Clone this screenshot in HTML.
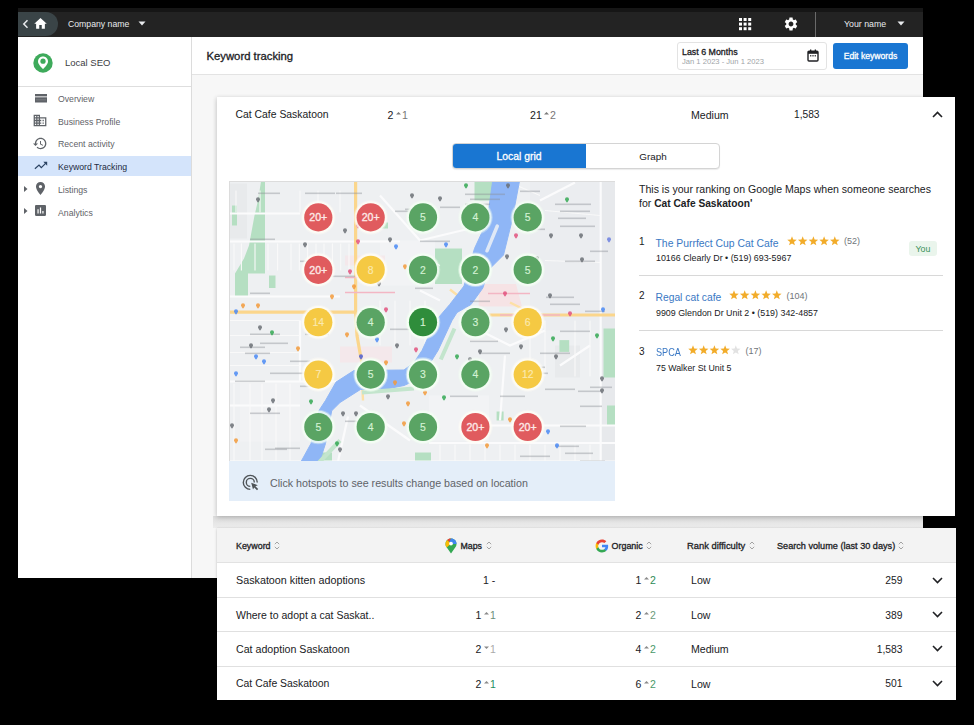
<!DOCTYPE html>
<html><head><meta charset="utf-8">
<style>
*{margin:0;padding:0;box-sizing:border-box}
html,body{width:974px;height:725px;overflow:hidden;background:#000}
body{position:relative;font-family:"Liberation Sans",sans-serif;color:#202124}
.a{position:absolute;white-space:nowrap}
#topbar{left:18px;top:8px;width:905px;height:29px;background:#232323;border-top:4px solid #161616}
#pill{left:18px;top:12px;width:40px;height:24px;background:#3a4447;border-radius:0 12px 12px 0}
#side{left:18px;top:37px;width:174px;height:541px;background:#fff;border-right:1px solid #dcdcdc}
#hdr{left:192px;top:37px;width:731px;height:38px;background:#fff;border-bottom:1px solid #e3e3e3}
#main{left:192px;top:75px;width:731px;height:503px;background:#f7f7f7}
.card{background:#fff;box-shadow:0 1px 3px rgba(0,0,0,.18),0 0 1px rgba(0,0,0,.1)}
#card1{left:217px;top:97px;width:738px;height:419px;box-shadow:0 2px 5px rgba(0,0,0,.16),-1px 0 4px rgba(0,0,0,.08)}
#card2{left:217px;top:528px;width:739px;height:172px}
.m{-webkit-text-stroke:0.3px currentColor}
.nav{left:18px;width:173px;height:21px}
.nav span{position:absolute;left:40px;top:5px;font-size:8.7px;color:#5f6368}
.nav svg{position:absolute;left:16px;top:3px}
</style></head><body>
<div id="topbar" class="a"></div>
<div id="pill" class="a"></div>
<div id="side" class="a"></div>
<div id="hdr" class="a"></div>
<div id="main" class="a"></div>
<div class="a" style="left:213px;top:516px;width:710px;height:12px;background:linear-gradient(#dedede,#ececec)"></div>
<div id="card1" class="a card"></div>
<div id="card2" class="a card"></div>
<!-- TOP BAR -->
<svg class="a" style="left:21px;top:19px" width="9" height="10" viewBox="0 0 9 10"><path d="M6.5 1.2 L2.8 5 L6.5 8.8" fill="none" stroke="#e8eaed" stroke-width="1.5"/></svg>
<svg class="a" style="left:33px;top:16px" width="15" height="14" viewBox="0 0 24 22"><path d="M10 20v-6h4v6h5v-8h3L12 3 2 12h3v8z" fill="#fff"/></svg>
<div class="a t" style="left:68px;top:18px;font-size:8.7px;line-height:12px;color:#e8eaed">Company name</div>
<svg class="a" style="left:138px;top:21px" width="8" height="5" viewBox="0 0 8 5"><path d="M0.5 0.5h7L4 4.5z" fill="#e8eaed"/></svg>
<svg class="a" style="left:738.7px;top:18.2px" width="13" height="13" viewBox="0 0 13 13" fill="#fff"><rect x="0.0" y="0.0" width="3" height="3"/><rect x="4.6" y="0.0" width="3" height="3"/><rect x="9.2" y="0.0" width="3" height="3"/><rect x="0.0" y="4.6" width="3" height="3"/><rect x="4.6" y="4.6" width="3" height="3"/><rect x="9.2" y="4.6" width="3" height="3"/><rect x="0.0" y="9.2" width="3" height="3"/><rect x="4.6" y="9.2" width="3" height="3"/><rect x="9.2" y="9.2" width="3" height="3"/></svg>
<svg class="a" style="left:782.6px;top:16.2px" width="16" height="16" viewBox="0 0 24 24"><path fill="#fff" d="M19.14 12.94c.04-.3.06-.61.06-.94 0-.32-.02-.64-.07-.94l2.03-1.58c.18-.14.23-.41.12-.61l-1.92-3.32c-.12-.22-.37-.29-.59-.22l-2.39.96c-.5-.38-1.03-.7-1.62-.94l-.36-2.54c-.04-.24-.24-.41-.48-.41h-3.84c-.24 0-.43.17-.47.41l-.36 2.54c-.59.24-1.13.57-1.62.94l-2.39-.96c-.22-.08-.47 0-.59.22L2.74 8.87c-.12.21-.08.47.12.61l2.03 1.58c-.05.3-.09.63-.09.94s.02.64.07.94l-2.03 1.58c-.18.14-.23.41-.12.61l1.92 3.32c.12.22.37.29.59.22l2.39-.96c.5.38 1.03.7 1.62.94l.36 2.54c.05.24.24.41.48.41h3.84c.24 0 .44-.17.47-.41l.36-2.54c.59-.24 1.13-.56 1.62-.94l2.39.96c.22.08.47 0 .59-.22l1.92-3.32c.12-.22.07-.47-.12-.61l-2.01-1.58zM12 15.6c-1.98 0-3.6-1.62-3.6-3.6s1.62-3.6 3.6-3.6 3.6 1.62 3.6 3.6-1.62 3.6-3.6 3.6z"/></svg>
<div class="a" style="left:815px;top:12px;width:1px;height:25px;background:#6a6a6a"></div>
<div class="a t" style="left:844px;top:18px;font-size:8.8px;line-height:12px;color:#e8eaed">Your name</div>
<svg class="a" style="left:897px;top:21px" width="8" height="5" viewBox="0 0 8 5"><path d="M0.5 0.5h7L4 4.5z" fill="#e8eaed"/></svg>

<!-- SIDEBAR -->
<svg class="a" style="left:32.5px;top:52.5px" width="20" height="20" viewBox="0 0 20 20"><circle cx="10" cy="10" r="9.7" fill="#3eaa5b"/><path d="M10 3.6c-2.9 0-5 2.2-5 4.9 0 3.2 5 7.6 5 7.6s5-4.4 5-7.6c0-2.7-2.1-4.9-5-4.9z" fill="#fff"/><circle cx="10" cy="8.2" r="2.6" fill="#3eaa5b"/></svg>
<div class="a t" style="left:65px;top:57px;font-size:9.5px;line-height:12px;color:#3c4043">Local SEO</div>
<div class="a" style="left:18px;top:86px;width:173px;height:1px;background:#dedede"></div>
<div class="a" style="left:18px;top:155.5px;width:173px;height:20.5px;background:#d4e4fb"></div>
<!-- NAV -->
<svg class="a" style="left:35px;top:94px" width="12" height="9" viewBox="0 0 12 9" fill="#5f6368"><rect x="0" y="0" width="12" height="2.4"/><rect x="0" y="3.3" width="12" height="5.2"/><rect x="1" y="5.6" width="10" height="0.6" fill="#8a8e92"/></svg>
<div class="a t" style="left:58px;top:93px;font-size:8.7px;line-height:12px;color:#5f6368">Overview</div>
<svg class="a" style="left:33px;top:114px" width="14" height="13" viewBox="1 2 22 20"><path fill="#5f6368" d="M12 7V3H2v18h20V7H12zM6 19H4v-2h2v2zm0-4H4v-2h2v2zm0-4H4V9h2v2zm0-4H4V5h2v2zm4 12H8v-2h2v2zm0-4H8v-2h2v2zm0-4H8V9h2v2zm0-4H8V5h2v2zm10 12h-8v-2h2v-2h-2v-2h2v-2h-2V9h8v10zm-2-8h-2v2h2v-2zm0 4h-2v2h2v-2z"/></svg>
<div class="a t" style="left:58px;top:115.5px;font-size:8.7px;line-height:12px;color:#5f6368">Business Profile</div>
<svg class="a" style="left:33px;top:137px" width="14" height="13" viewBox="1 2.5 22 19"><path fill="#5f6368" d="M13 3c-4.970 0-9 4.03-9 9H1l3.89 3.89.07.14L9 12H6c0-3.87 3.13-7 7-7s7 3.130 7 7-3.13 7-7 7c-1.93 0-3.68-.79-4.94-2.06l-1.42 1.42C8.27 19.99 10.51 21 13 21c4.97 0 9-4.03 9-9s-4.03-9-9-9zm-1 5v5l4.28 2.54.72-1.21-3.5-2.08V8H12z"/></svg>
<div class="a t" style="left:58px;top:138px;font-size:8.7px;line-height:12px;color:#5f6368">Recent activity</div>
<svg class="a" style="left:34px;top:160px" width="14" height="10" viewBox="0 0 14 10"><path d="M0.9 8.7L5 5 7.3 7.6 11.6 3.3" fill="none" stroke="#2a4262" stroke-width="1.2"/><path d="M9.3 1.8H13.2V5.7z" fill="#2a4262"/></svg>
<div class="a t" style="left:58px;top:161px;font-size:8.7px;line-height:12px;color:#1d2b3f">Keyword Tracking</div>
<svg class="a" style="left:24px;top:186px" width="4" height="6" viewBox="0 0 4 6"><path d="M0 0l3.5 3L0 6z" fill="#5f6368"/></svg>
<svg class="a" style="left:35px;top:182px" width="11" height="13" viewBox="5 2 14 20"><path fill="#5f6368" d="M12 2C8.130 2 5 5.130 5 9c0 5.250 7 13 7 13s7-7.750 7-13c0-3.870-3.130-7-7-7zm0 9.5c-1.380 0-2.500-1.120-2.500-2.500s1.120-2.500 2.500-2.500 2.500 1.120 2.500 2.500-1.120 2.500-2.500 2.500z"/></svg>
<div class="a t" style="left:58px;top:183.5px;font-size:8.7px;line-height:12px;color:#5f6368">Listings</div>
<svg class="a" style="left:24px;top:208px" width="4" height="6" viewBox="0 0 4 6"><path d="M0 0l3.5 3L0 6z" fill="#5f6368"/></svg>
<svg class="a" style="left:35px;top:205px" width="11" height="11" viewBox="3 3 18 18"><path fill="#5f6368" d="M19 3H5c-1.100 0-2 .9-2 2v14c0 1.100.9 2 2 2h14c1.100 0 2-.9 2-2V5c0-1.100-.9-2-2-2zM9 17H7v-7h2v7zm4 0h-2V7h2v10zm4 0h-2v-4h2v4z"/></svg>
<div class="a t" style="left:58px;top:206.5px;font-size:8.7px;line-height:12px;color:#5f6368">Analytics</div>

<!-- HEADER -->
<div class="a t m" style="left:206.5px;top:49.5px;font-size:11.3px;line-height:13px;color:#202124">Keyword tracking</div>
<div class="a" style="left:677px;top:42px;width:150px;height:28px;border:1px solid #e3e3e3;border-radius:3px;background:#fff"></div>
<div class="a t m" style="left:682px;top:45.5px;font-size:8.85px;line-height:12px;color:#202124">Last 6 Months</div>
<div class="a t" style="left:682px;top:56px;font-size:7.6px;line-height:12px;color:#a0a4a8">Jan 1 2023 - Jun 1 2023</div>
<svg class="a" style="left:807px;top:49px" width="12" height="13" viewBox="0 0 12 13"><rect x="1" y="2.2" width="10" height="9.8" rx="1" fill="none" stroke="#202124" stroke-width="1.4"/><rect x="1" y="2.2" width="10" height="2.6" fill="#202124"/><rect x="3" y="0.5" width="1.3" height="2.5" fill="#202124"/><rect x="7.7" y="0.5" width="1.3" height="2.5" fill="#202124"/><rect x="3" y="6.2" width="1.4" height="1.2" fill="#202124"/><rect x="5.3" y="6.2" width="1.4" height="1.2" fill="#202124"/><rect x="7.6" y="6.2" width="1.4" height="1.2" fill="#202124"/></svg>
<div class="a" style="left:833px;top:43px;width:75px;height:26px;border-radius:3px;background:#1976d2"></div>
<div class="a t m" style="left:833px;top:50px;width:75px;text-align:center;font-size:8.65px;line-height:12px;color:#fff">Edit keywords</div>
<!-- CARD1 TOP ROW -->
<div class="a t" style="left:235.5px;top:108.8px;font-size:10.4px;line-height:12px;color:#202124">Cat Cafe Saskatoon</div>
<div class="a t" style="left:387.5px;top:108.8px;font-size:10.6px;line-height:12px;color:#202124">2</div>
<svg class="a" style="left:395.5px;top:111.8px" width="5" height="3" viewBox="0 0 5 3"><path d="M0 2.5L2.5 0 5 2.5z" fill="#7a7a7a"/></svg>
<div class="a t" style="left:402px;top:108.8px;font-size:10.6px;line-height:12px;color:#777">1</div>
<div class="a t" style="left:530px;top:108.8px;font-size:10.6px;line-height:12px;color:#202124">21</div>
<svg class="a" style="left:543.5px;top:111.8px" width="5" height="3" viewBox="0 0 5 3"><path d="M0 2.5L2.5 0 5 2.5z" fill="#7a7a7a"/></svg>
<div class="a t" style="left:550px;top:108.8px;font-size:10.6px;line-height:12px;color:#777">2</div>
<div class="a t" style="left:691px;top:108.8px;font-size:10.6px;line-height:12px;color:#202124">Medium</div>
<div class="a t" style="left:794px;top:108.8px;font-size:10.2px;line-height:12px;color:#202124">1,583</div>
<svg class="a" style="left:932px;top:110.5px" width="11" height="7" viewBox="0 0 11 7"><path d="M1 6L5.5 1.5 10 6" fill="none" stroke="#202124" stroke-width="1.6"/></svg>

<!-- TOGGLE -->
<div class="a" style="left:452px;top:143px;width:268px;height:26px;border:1px solid #d4d4d4;border-radius:4px;background:#fff;overflow:hidden;box-shadow:0 1px 1px rgba(0,0,0,.08)"><div style="position:absolute;left:0;top:0;width:133px;height:100%;background:#1976d2"></div></div>
<div class="a t m" style="left:452px;top:150.8px;width:134px;text-align:center;font-size:10.4px;line-height:12px;color:#fff">Local grid</div>
<div class="a t" style="left:586px;top:150.5px;width:134px;text-align:center;font-size:9.9px;line-height:12px;color:#202124">Graph</div>

<!-- RIGHT LIST -->
<div class="a t" style="left:639px;top:183px;font-size:10.55px;line-height:12px;color:#202124">This is your ranking on Google Maps when someone searches</div>
<div class="a t" style="left:639px;top:197px;font-size:10.55px;line-height:12px;color:#202124">for <b style="font-size:10.2px">Cat Cafe Saskatoon'</b></div>

<div class="a t" style="left:639px;top:236.3px;font-size:10px;line-height:12px;color:#202124">1</div>
<div class="a t" style="left:655.5px;top:237.5px;font-size:10.4px;line-height:12px;color:#3a78c4">The Purrfect Cup Cat Cafe</div>
<svg class="a" style="left:786.5px;top:235.5px" width="53.5" height="10" viewBox="0 0 53.5 10"><polygon points="5.00,0.30 6.23,3.60 9.76,3.75 7.00,5.95 7.94,9.35 5.00,7.40 2.06,9.35 3.00,5.95 0.24,3.75 3.77,3.60" fill="#f2ac2a"/><polygon points="15.70,0.30 16.93,3.60 20.46,3.75 17.70,5.95 18.64,9.35 15.70,7.40 12.76,9.35 13.70,5.95 10.94,3.75 14.47,3.60" fill="#f2ac2a"/><polygon points="26.40,0.30 27.63,3.60 31.16,3.75 28.40,5.95 29.34,9.35 26.40,7.40 23.46,9.35 24.40,5.95 21.64,3.75 25.17,3.60" fill="#f2ac2a"/><polygon points="37.10,0.30 38.33,3.60 41.86,3.75 39.10,5.95 40.04,9.35 37.10,7.40 34.16,9.35 35.10,5.95 32.34,3.75 35.87,3.60" fill="#f2ac2a"/><polygon points="47.80,0.30 49.03,3.60 52.56,3.75 49.80,5.95 50.74,9.35 47.80,7.40 44.86,9.35 45.80,5.95 43.04,3.75 46.57,3.60" fill="#f2ac2a"/></svg>
<div class="a t" style="left:844px;top:235px;font-size:9px;line-height:12px;color:#70757a">(52)</div>
<div class="a" style="left:909px;top:241px;width:28px;height:15px;border-radius:3px;background:#eaf5ec"></div>
<div class="a t" style="left:909px;top:242.5px;width:28px;text-align:center;font-size:8.8px;line-height:12px;color:#3a9159">You</div>
<div class="a t" style="left:656px;top:252px;font-size:8.9px;line-height:12px;color:#202124">10166 Clearly Dr • (519) 693-5967</div>
<div class="a" style="left:639px;top:275px;width:304px;height:1px;background:#d8d8d8"></div>

<div class="a t" style="left:639px;top:290.3px;font-size:10px;line-height:12px;color:#202124">2</div>
<div class="a t" style="left:655.5px;top:292px;font-size:10.3px;line-height:12px;color:#3a78c4">Regal cat cafe</div>
<svg class="a" style="left:729px;top:290.0px" width="53.5" height="10" viewBox="0 0 53.5 10"><polygon points="5.00,0.30 6.23,3.60 9.76,3.75 7.00,5.95 7.94,9.35 5.00,7.40 2.06,9.35 3.00,5.95 0.24,3.75 3.77,3.60" fill="#f2ac2a"/><polygon points="15.70,0.30 16.93,3.60 20.46,3.75 17.70,5.95 18.64,9.35 15.70,7.40 12.76,9.35 13.70,5.95 10.94,3.75 14.47,3.60" fill="#f2ac2a"/><polygon points="26.40,0.30 27.63,3.60 31.16,3.75 28.40,5.95 29.34,9.35 26.40,7.40 23.46,9.35 24.40,5.95 21.64,3.75 25.17,3.60" fill="#f2ac2a"/><polygon points="37.10,0.30 38.33,3.60 41.86,3.75 39.10,5.95 40.04,9.35 37.10,7.40 34.16,9.35 35.10,5.95 32.34,3.75 35.87,3.60" fill="#f2ac2a"/><polygon points="47.80,0.30 49.03,3.60 52.56,3.75 49.80,5.95 50.74,9.35 47.80,7.40 44.86,9.35 45.80,5.95 43.04,3.75 46.57,3.60" fill="#f2ac2a"/></svg>
<div class="a t" style="left:786.5px;top:290px;font-size:9px;line-height:12px;color:#70757a">(104)</div>
<div class="a t" style="left:656px;top:306.5px;font-size:8.9px;line-height:12px;color:#202124">9909 Glendon Dr Unit 2 • (519) 342-4857</div>
<div class="a" style="left:639px;top:330px;width:304px;height:1px;background:#d8d8d8"></div>

<div class="a t" style="left:639px;top:345.8px;font-size:10px;line-height:12px;color:#202124">3</div>
<div class="a t" style="left:655.5px;top:346.5px;font-size:10.4px;line-height:12px;color:#3a78c4;transform:scaleX(0.88);transform-origin:0 0">SPCA</div>
<svg class="a" style="left:688px;top:345.3px" width="53.5" height="10" viewBox="0 0 53.5 10"><polygon points="5.00,0.30 6.23,3.60 9.76,3.75 7.00,5.95 7.94,9.35 5.00,7.40 2.06,9.35 3.00,5.95 0.24,3.75 3.77,3.60" fill="#f2ac2a"/><polygon points="15.70,0.30 16.93,3.60 20.46,3.75 17.70,5.95 18.64,9.35 15.70,7.40 12.76,9.35 13.70,5.95 10.94,3.75 14.47,3.60" fill="#f2ac2a"/><polygon points="26.40,0.30 27.63,3.60 31.16,3.75 28.40,5.95 29.34,9.35 26.40,7.40 23.46,9.35 24.40,5.95 21.64,3.75 25.17,3.60" fill="#f2ac2a"/><polygon points="37.10,0.30 38.33,3.60 41.86,3.75 39.10,5.95 40.04,9.35 37.10,7.40 34.16,9.35 35.10,5.95 32.34,3.75 35.87,3.60" fill="#f2ac2a"/><polygon points="47.80,0.30 49.03,3.60 52.56,3.75 49.80,5.95 50.74,9.35 47.80,7.40 44.86,9.35 45.80,5.95 43.04,3.75 46.57,3.60" fill="#e2e2e2"/></svg>
<div class="a t" style="left:745.5px;top:345px;font-size:9px;line-height:12px;color:#70757a">(17)</div>
<div class="a t" style="left:656px;top:362px;font-size:8.8px;line-height:12px;color:#202124">75 Walker St Unit 5</div>

<!-- MAP -->
<svg class="a" style="left:229px;top:180.5px" width="386" height="281" viewBox="229 180.5 386 281">
<defs><filter id="bl" x="0" y="0" width="1" height="1"><feGaussianBlur stdDeviation="0.45"/></filter></defs>
<g filter="url(#bl)">
<rect x="229" y="180.5" width="386" height="281" fill="#eef0f2"/>
<rect x="229" y="183" width="18" height="55" fill="#e8eaec"/>
<rect x="530" y="180" width="70" height="150" fill="#ebedf0"/>
<rect x="601" y="180" width="14" height="281" fill="#e7e9ec"/>
<rect x="555" y="345" width="25" height="32" fill="#e8eaec"/>
<rect x="380" y="240" width="55" height="45" fill="#f2f3f5"/>
<rect x="240" y="381" width="60" height="60" fill="#f1f2f4"/>
<rect x="429" y="395" width="60" height="45" fill="#f2f3f5"/>
<polygon points="261,181 265,181 265,273 248,273 248,296 235,296 235,273 244,258 249,245 254.5,215 258,200" fill="#b5dfc2"/>
<path d="M478.7 283.5 L516 283.5 L522 306 L478.7 306z" fill="#f6e3e5"/>
<rect x="340" y="346" width="52" height="16" fill="#f5e6e8" opacity="0.8"/>
<rect x="345" y="255" width="40" height="10" fill="#f5e6e8" opacity="0.8"/>
<rect x="269" y="275" width="6.5" height="12.5" fill="#b5dfc2"/>
<rect x="474.5" y="180" width="18.5" height="20" fill="#b5dfc2"/>
<rect x="435" y="248" width="27" height="35.5" fill="#b5dfc2"/>
<rect x="603.5" y="328" width="11.5" height="49" fill="#b5dfc2"/>
<rect x="559.4" y="339.6" width="9.8" height="11.8" fill="#b5dfc2"/>
<rect x="496.6" y="411" width="7" height="9" fill="#b5dfc2"/>
<rect x="318" y="452" width="14" height="9" fill="#b5dfc2"/>
<rect x="232" y="205" width="5" height="20" fill="#b5dfc2"/>
<rect x="607" y="405" width="8" height="20" fill="#b5dfc2"/>
<rect x="415" y="452" width="16" height="9" fill="#b5dfc2"/>
<rect x="380" y="222" width="8" height="6" fill="#b5dfc2"/>
<path d="M229 241 L400 241 M229 213 L300 213 M229 381 L354 381 M429 442.5 L615 442.5 M488 425 L615 425 M600.7 180 L600.7 461 M300 320 L300 381 M380 195 L420 240 M348 416 L338 461 M420 240 L470 228 M540 200 L575 182 M480 330 L510 345 L545 330 M229 296 L340 296 M420 290 L440 300 M229 405 L300 405 M360 405 L410 440 M505 355 L500 420 M560 365 L590 345 M229 461 L615 461" stroke="#fbfbfc" stroke-width="2.2" fill="none"/>
<path d="M234 243 L234 270 M241.4 243 L241.4 270 M255 243 L255 270 M268 243 L268 270 M277.6 243 L277.6 270 M291 243 L291 270 M299.3 243 L299.3 270 M307.6 243 L307.6 270 M316 243 L316 270 M324 243 L324 270 M332.4 243 L332.4 270 M340.7 243 L340.7 270 M349 243 L349 270 M234 383 L234 461 M250 383 L250 461 M262 383 L262 461 M276 383 L276 461 M290 383 L290 461 M236 190 L236 212 M260 190 L260 212 M300 190 L300 212 M318 190 L318 212 M340 190 L340 212 M440 444 L440 461 M455 444 L455 461 M470 444 L470 461 M485 444 L485 461 M500 444 L500 461 M515 444 L515 461 M530 444 L530 461 M545 444 L545 461 M560 444 L560 461 M575 444 L575 461 M590 444 L590 461 M380 300 L380 345 M395 300 L395 345 M410 300 L410 345 M425 300 L425 345 M229 320 L300 320 M229 335 L300 335 M229 352 L300 352 M229 365 L300 365 M530 320 L530 376 M545 320 L545 376 M575 320 L575 376 M590 320 L590 376 M470 340 L500 340 M505 180 L540 195 M545 210 L600 215 M545 260 L600 262 M420 255 L440 265 M360 330 L380 340" stroke="#fafafa" stroke-width="1.2" fill="none" opacity="0.9"/>
<path d="M229 311.7 L355.6 311.7 M355.6 180 L355.6 311.7 L357 335 L361 358 M489 314.5 L615 314.5" stroke="#fbd68c" stroke-width="3.2" fill="none"/>
<path d="M361 358 L363 400 M450 289 L468 303 M510 302 L530 312" stroke="#fde0a6" stroke-width="2.4" fill="none"/>
<path d="M345 277 L380 277 M345 292 L395 292 M488 293 L530 293 M500 314.5 L560 314.5" stroke="#f3b6c4" stroke-width="1.5" fill="none"/>
<polygon points="493,178 487,221 474.5,248 464,285.5 449.7,304 436,320 422,350 414,362 404,369.5 354,370 336,381.6 325.5,400 319,410 311,443 300,463 319,463 325.5,443 331.7,410.3 340,402 360.4,389 389,388 404,385 415,380 428,366 438,350 452,320 457,312 471,304 482.8,287.6 489,269 503.5,254.5 511.8,221 520,178" fill="#8fb6f6" stroke="#8fb6f6" stroke-width="1" stroke-linejoin="round"/>
<path d="M497.3 225.5 L487 250.3" stroke="#dfe8f6" stroke-width="3.5" stroke-linecap="round"/>
<path d="M440.8 359 L454.5 328 M362 392 L414 388 M319 462 L340 440" stroke="#c3e5cd" stroke-width="4" fill="none"/>
<rect x="258" y="192" width="22" height="1.6" fill="#8a9096" opacity="0.42"/>
<rect x="305" y="192" width="30" height="1.6" fill="#8a9096" opacity="0.42"/>
<rect x="336" y="192" width="26" height="1.6" fill="#8a9096" opacity="0.42"/>
<rect x="465" y="193" width="40" height="1.6" fill="#8a9096" opacity="0.42"/>
<rect x="520" y="190" width="20" height="1.6" fill="#8a9096" opacity="0.42"/>
<rect x="555" y="203" width="36" height="1.6" fill="#8a9096" opacity="0.42"/>
<rect x="560" y="210" width="30" height="1.6" fill="#8a9096" opacity="0.42"/>
<rect x="558" y="217" width="28" height="1.6" fill="#8a9096" opacity="0.42"/>
<rect x="250" y="238" width="25" height="1.6" fill="#8a9096" opacity="0.42"/>
<rect x="300" y="260" width="30" height="1.6" fill="#8a9096" opacity="0.42"/>
<rect x="520" y="228" width="25" height="1.6" fill="#8a9096" opacity="0.42"/>
<rect x="560" y="225" width="35" height="1.6" fill="#8a9096" opacity="0.42"/>
<rect x="565" y="260" width="30" height="1.6" fill="#8a9096" opacity="0.42"/>
<rect x="590" y="250" width="18" height="1.6" fill="#8a9096" opacity="0.42"/>
<rect x="250" y="333" width="30" height="1.6" fill="#8a9096" opacity="0.42"/>
<rect x="305" y="333" width="24" height="1.6" fill="#8a9096" opacity="0.42"/>
<rect x="390" y="328" width="25" height="1.6" fill="#8a9096" opacity="0.42"/>
<rect x="470" y="340" width="28" height="1.6" fill="#8a9096" opacity="0.42"/>
<rect x="560" y="330" width="30" height="1.6" fill="#8a9096" opacity="0.42"/>
<rect x="480" y="352" width="30" height="1.6" fill="#8a9096" opacity="0.42"/>
<rect x="540" y="352" width="30" height="1.6" fill="#8a9096" opacity="0.42"/>
<rect x="245" y="352" width="25" height="1.6" fill="#8a9096" opacity="0.42"/>
<rect x="235" y="380" width="30" height="1.6" fill="#8a9096" opacity="0.42"/>
<rect x="270" y="372" width="35" height="1.6" fill="#8a9096" opacity="0.42"/>
<rect x="450" y="395" width="28" height="1.6" fill="#8a9096" opacity="0.42"/>
<rect x="500" y="395" width="25" height="1.6" fill="#8a9096" opacity="0.42"/>
<rect x="545" y="388" width="30" height="1.6" fill="#8a9096" opacity="0.42"/>
<rect x="590" y="386" width="22" height="1.6" fill="#8a9096" opacity="0.42"/>
<rect x="250" y="412" width="30" height="1.6" fill="#8a9096" opacity="0.42"/>
<rect x="345" y="420" width="30" height="1.6" fill="#8a9096" opacity="0.42"/>
<rect x="470" y="425" width="20" height="1.6" fill="#8a9096" opacity="0.42"/>
<rect x="560" y="425" width="26" height="1.6" fill="#8a9096" opacity="0.42"/>
<rect x="275" y="447" width="25" height="1.6" fill="#8a9096" opacity="0.42"/>
<rect x="520" y="455" width="30" height="1.6" fill="#8a9096" opacity="0.42"/>
<rect x="580" y="460" width="25" height="1.6" fill="#8a9096" opacity="0.42"/>
<rect x="330" y="275" width="25" height="1.6" fill="#8a9096" opacity="0.42"/>
<rect x="395" y="210" width="25" height="1.6" fill="#8a9096" opacity="0.42"/>
<rect x="420" y="240" width="30" height="1.6" fill="#8a9096" opacity="0.42"/>
<rect x="470" y="300" width="20" height="1.6" fill="#8a9096" opacity="0.42"/>
<rect x="415" y="287" width="18" height="1.6" fill="#8a9096" opacity="0.42"/>
<rect x="250" y="292" width="20" height="1.6" fill="#8a9096" opacity="0.42"/>
<rect x="546" y="296" width="28" height="1.6" fill="#8a9096" opacity="0.42"/>
<rect x="550" y="303" width="30" height="1.6" fill="#8a9096" opacity="0.42"/>
<rect x="585" y="310" width="20" height="1.6" fill="#8a9096" opacity="0.42"/>
<rect x="580" y="405" width="22" height="1.6" fill="#8a9096" opacity="0.42"/>
<rect x="578" y="390" width="24" height="1.6" fill="#8a9096" opacity="0.42"/>
<rect x="520" y="366" width="25" height="1.6" fill="#8a9096" opacity="0.42"/>
<rect x="520" y="372" width="28" height="1.6" fill="#8a9096" opacity="0.42"/>
<rect x="260" y="342" width="28" height="1.6" fill="#8a9096" opacity="0.42"/>
<rect x="240" y="346" width="25" height="1.6" fill="#8a9096" opacity="0.42"/>
<rect x="290" y="360" width="20" height="1.6" fill="#8a9096" opacity="0.42"/>
<rect x="405" y="208" width="26" height="1.6" fill="#8a9096" opacity="0.42"/>
<rect x="440" y="206" width="20" height="1.6" fill="#8a9096" opacity="0.42"/>
<rect x="555" y="445" width="24" height="1.6" fill="#8a9096" opacity="0.42"/>
<rect x="565" y="452" width="28" height="1.6" fill="#8a9096" opacity="0.42"/>
<rect x="300" y="385" width="20" height="1.6" fill="#8a9096" opacity="0.42"/>
<rect x="265" y="448" width="22" height="1.6" fill="#8a9096" opacity="0.42"/>
<rect x="470" y="198" width="30" height="1.6" fill="#8a9096" opacity="0.42"/>
<rect x="465" y="203" width="25" height="1.6" fill="#8a9096" opacity="0.42"/>
<path d="M256 198.8a2 2 0 1 1 4 0c0 1.4-2 3.4-2 3.4s-2-2-2-3.4z" fill="#6b7075" opacity="0.85"/>
<path d="M303 243.8a2 2 0 1 1 4 0c0 1.4-2 3.4-2 3.4s-2-2-2-3.4z" fill="#6b7075" opacity="0.85"/>
<path d="M343 229.8a2 2 0 1 1 4 0c0 1.4-2 3.4-2 3.4s-2-2-2-3.4z" fill="#6b7075" opacity="0.85"/>
<path d="M388 238.8a2 2 0 1 1 4 0c0 1.4-2 3.4-2 3.4s-2-2-2-3.4z" fill="#6b7075" opacity="0.85"/>
<path d="M410 194.8a2 2 0 1 1 4 0c0 1.4-2 3.4-2 3.4s-2-2-2-3.4z" fill="#6b7075" opacity="0.85"/>
<path d="M438 197.8a2 2 0 1 1 4 0c0 1.4-2 3.4-2 3.4s-2-2-2-3.4z" fill="#6b7075" opacity="0.85"/>
<path d="M464 184.8a2 2 0 1 1 4 0c0 1.4-2 3.4-2 3.4s-2-2-2-3.4z" fill="#34a853" opacity="0.85"/>
<path d="M506 184.8a2 2 0 1 1 4 0c0 1.4-2 3.4-2 3.4s-2-2-2-3.4z" fill="#6b7075" opacity="0.85"/>
<path d="M565 198.8a2 2 0 1 1 4 0c0 1.4-2 3.4-2 3.4s-2-2-2-3.4z" fill="#34a853" opacity="0.85"/>
<path d="M549 234.8a2 2 0 1 1 4 0c0 1.4-2 3.4-2 3.4s-2-2-2-3.4z" fill="#6b7075" opacity="0.85"/>
<path d="M579 234.8a2 2 0 1 1 4 0c0 1.4-2 3.4-2 3.4s-2-2-2-3.4z" fill="#6b7075" opacity="0.85"/>
<path d="M607 238.8a2 2 0 1 1 4 0c0 1.4-2 3.4-2 3.4s-2-2-2-3.4z" fill="#6b7fe0" opacity="0.85"/>
<path d="M356 224.8a2 2 0 1 1 4 0c0 1.4-2 3.4-2 3.4s-2-2-2-3.4z" fill="#e2527e" opacity="0.85"/>
<path d="M356 240.8a2 2 0 1 1 4 0c0 1.4-2 3.4-2 3.4s-2-2-2-3.4z" fill="#e2527e" opacity="0.85"/>
<path d="M348 270.8a2 2 0 1 1 4 0c0 1.4-2 3.4-2 3.4s-2-2-2-3.4z" fill="#e2527e" opacity="0.85"/>
<path d="M394 245.8a2 2 0 1 1 4 0c0 1.4-2 3.4-2 3.4s-2-2-2-3.4z" fill="#4a8af4" opacity="0.85"/>
<path d="M444 243.8a2 2 0 1 1 4 0c0 1.4-2 3.4-2 3.4s-2-2-2-3.4z" fill="#4a8af4" opacity="0.85"/>
<path d="M514 234.8a2 2 0 1 1 4 0c0 1.4-2 3.4-2 3.4s-2-2-2-3.4z" fill="#e2527e" opacity="0.85"/>
<path d="M330 295.8a2 2 0 1 1 4 0c0 1.4-2 3.4-2 3.4s-2-2-2-3.4z" fill="#f29a3b" opacity="0.85"/>
<path d="M256 304.8a2 2 0 1 1 4 0c0 1.4-2 3.4-2 3.4s-2-2-2-3.4z" fill="#f29a3b" opacity="0.85"/>
<path d="M241 304.8a2 2 0 1 1 4 0c0 1.4-2 3.4-2 3.4s-2-2-2-3.4z" fill="#f29a3b" opacity="0.85"/>
<path d="M403 265.8a2 2 0 1 1 4 0c0 1.4-2 3.4-2 3.4s-2-2-2-3.4z" fill="#f29a3b" opacity="0.85"/>
<path d="M376 277.8a2 2 0 1 1 4 0c0 1.4-2 3.4-2 3.4s-2-2-2-3.4z" fill="#4b5ed6" opacity="0.85"/>
<path d="M352 285.8a2 2 0 1 1 4 0c0 1.4-2 3.4-2 3.4s-2-2-2-3.4z" fill="#f29a3b" opacity="0.85"/>
<path d="M234 310.8a2 2 0 1 1 4 0c0 1.4-2 3.4-2 3.4s-2-2-2-3.4z" fill="#4a8af4" opacity="0.85"/>
<path d="M258 326.8a2 2 0 1 1 4 0c0 1.4-2 3.4-2 3.4s-2-2-2-3.4z" fill="#6b7075" opacity="0.85"/>
<path d="M377 282.8a2 2 0 1 1 4 0c0 1.4-2 3.4-2 3.4s-2-2-2-3.4z" fill="#6b7075" opacity="0.85"/>
<path d="M384 308.8a2 2 0 1 1 4 0c0 1.4-2 3.4-2 3.4s-2-2-2-3.4z" fill="#e2527e" opacity="0.85"/>
<path d="M345 333.8a2 2 0 1 1 4 0c0 1.4-2 3.4-2 3.4s-2-2-2-3.4z" fill="#f29a3b" opacity="0.85"/>
<path d="M270 331.8a2 2 0 1 1 4 0c0 1.4-2 3.4-2 3.4s-2-2-2-3.4z" fill="#34a853" opacity="0.85"/>
<path d="M249 344.8a2 2 0 1 1 4 0c0 1.4-2 3.4-2 3.4s-2-2-2-3.4z" fill="#6b7075" opacity="0.85"/>
<path d="M254 355.8a2 2 0 1 1 4 0c0 1.4-2 3.4-2 3.4s-2-2-2-3.4z" fill="#4a8af4" opacity="0.85"/>
<path d="M262 360.8a2 2 0 1 1 4 0c0 1.4-2 3.4-2 3.4s-2-2-2-3.4z" fill="#4a8af4" opacity="0.85"/>
<path d="M234 372.8a2 2 0 1 1 4 0c0 1.4-2 3.4-2 3.4s-2-2-2-3.4z" fill="#4a8af4" opacity="0.85"/>
<path d="M395 344.8a2 2 0 1 1 4 0c0 1.4-2 3.4-2 3.4s-2-2-2-3.4z" fill="#6b7075" opacity="0.85"/>
<path d="M375 338.8a2 2 0 1 1 4 0c0 1.4-2 3.4-2 3.4s-2-2-2-3.4z" fill="#4a8af4" opacity="0.85"/>
<path d="M359 355.8a2 2 0 1 1 4 0c0 1.4-2 3.4-2 3.4s-2-2-2-3.4z" fill="#4b5ed6" opacity="0.85"/>
<path d="M414 348.8a2 2 0 1 1 4 0c0 1.4-2 3.4-2 3.4s-2-2-2-3.4z" fill="#e2527e" opacity="0.85"/>
<path d="M384 361.8a2 2 0 1 1 4 0c0 1.4-2 3.4-2 3.4s-2-2-2-3.4z" fill="#f29a3b" opacity="0.85"/>
<path d="M455 355.8a2 2 0 1 1 4 0c0 1.4-2 3.4-2 3.4s-2-2-2-3.4z" fill="#34a853" opacity="0.85"/>
<path d="M519 345.8a2 2 0 1 1 4 0c0 1.4-2 3.4-2 3.4s-2-2-2-3.4z" fill="#6b7075" opacity="0.85"/>
<path d="M548 294.8a2 2 0 1 1 4 0c0 1.4-2 3.4-2 3.4s-2-2-2-3.4z" fill="#6b7075" opacity="0.85"/>
<path d="M503 292.8a2 2 0 1 1 4 0c0 1.4-2 3.4-2 3.4s-2-2-2-3.4z" fill="#e2527e" opacity="0.85"/>
<path d="M568 312.8a2 2 0 1 1 4 0c0 1.4-2 3.4-2 3.4s-2-2-2-3.4z" fill="#e2527e" opacity="0.85"/>
<path d="M601 308.8a2 2 0 1 1 4 0c0 1.4-2 3.4-2 3.4s-2-2-2-3.4z" fill="#4a8af4" opacity="0.85"/>
<path d="M505 255.8a2 2 0 1 1 4 0c0 1.4-2 3.4-2 3.4s-2-2-2-3.4z" fill="#6b7075" opacity="0.85"/>
<path d="M535 257.8a2 2 0 1 1 4 0c0 1.4-2 3.4-2 3.4s-2-2-2-3.4z" fill="#6b7075" opacity="0.85"/>
<path d="M580 258.8a2 2 0 1 1 4 0c0 1.4-2 3.4-2 3.4s-2-2-2-3.4z" fill="#6b7075" opacity="0.85"/>
<path d="M504 328.8a2 2 0 1 1 4 0c0 1.4-2 3.4-2 3.4s-2-2-2-3.4z" fill="#6b7075" opacity="0.85"/>
<path d="M551 337.8a2 2 0 1 1 4 0c0 1.4-2 3.4-2 3.4s-2-2-2-3.4z" fill="#34a853" opacity="0.85"/>
<path d="M595 334.8a2 2 0 1 1 4 0c0 1.4-2 3.4-2 3.4s-2-2-2-3.4z" fill="#34a853" opacity="0.85"/>
<path d="M600 377.8a2 2 0 1 1 4 0c0 1.4-2 3.4-2 3.4s-2-2-2-3.4z" fill="#6b7075" opacity="0.85"/>
<path d="M600 389.8a2 2 0 1 1 4 0c0 1.4-2 3.4-2 3.4s-2-2-2-3.4z" fill="#6b7075" opacity="0.85"/>
<path d="M296 347.8a2 2 0 1 1 4 0c0 1.4-2 3.4-2 3.4s-2-2-2-3.4z" fill="#f29a3b" opacity="0.85"/>
<path d="M271 399.8a2 2 0 1 1 4 0c0 1.4-2 3.4-2 3.4s-2-2-2-3.4z" fill="#6b7075" opacity="0.85"/>
<path d="M267 408.8a2 2 0 1 1 4 0c0 1.4-2 3.4-2 3.4s-2-2-2-3.4z" fill="#6b7075" opacity="0.85"/>
<path d="M309 400.8a2 2 0 1 1 4 0c0 1.4-2 3.4-2 3.4s-2-2-2-3.4z" fill="#34a853" opacity="0.85"/>
<path d="M341 412.8a2 2 0 1 1 4 0c0 1.4-2 3.4-2 3.4s-2-2-2-3.4z" fill="#6b7075" opacity="0.85"/>
<path d="M354 412.8a2 2 0 1 1 4 0c0 1.4-2 3.4-2 3.4s-2-2-2-3.4z" fill="#6b7075" opacity="0.85"/>
<path d="M386 395.8a2 2 0 1 1 4 0c0 1.4-2 3.4-2 3.4s-2-2-2-3.4z" fill="#6b7075" opacity="0.85"/>
<path d="M393 381.8a2 2 0 1 1 4 0c0 1.4-2 3.4-2 3.4s-2-2-2-3.4z" fill="#f29a3b" opacity="0.85"/>
<path d="M442 396.8a2 2 0 1 1 4 0c0 1.4-2 3.4-2 3.4s-2-2-2-3.4z" fill="#34a853" opacity="0.85"/>
<path d="M423 391.8a2 2 0 1 1 4 0c0 1.4-2 3.4-2 3.4s-2-2-2-3.4z" fill="#f29a3b" opacity="0.85"/>
<path d="M406 402.8a2 2 0 1 1 4 0c0 1.4-2 3.4-2 3.4s-2-2-2-3.4z" fill="#f29a3b" opacity="0.85"/>
<path d="M402 422.8a2 2 0 1 1 4 0c0 1.4-2 3.4-2 3.4s-2-2-2-3.4z" fill="#f29a3b" opacity="0.85"/>
<path d="M508 418.8a2 2 0 1 1 4 0c0 1.4-2 3.4-2 3.4s-2-2-2-3.4z" fill="#f29a3b" opacity="0.85"/>
<path d="M546 430.8a2 2 0 1 1 4 0c0 1.4-2 3.4-2 3.4s-2-2-2-3.4z" fill="#4a8af4" opacity="0.85"/>
<path d="M555 444.8a2 2 0 1 1 4 0c0 1.4-2 3.4-2 3.4s-2-2-2-3.4z" fill="#4a8af4" opacity="0.85"/>
<path d="M485 444.8a2 2 0 1 1 4 0c0 1.4-2 3.4-2 3.4s-2-2-2-3.4z" fill="#f29a3b" opacity="0.85"/>
<path d="M234 439.8a2 2 0 1 1 4 0c0 1.4-2 3.4-2 3.4s-2-2-2-3.4z" fill="#f29a3b" opacity="0.85"/>
<path d="M230 424.8a2 2 0 1 1 4 0c0 1.4-2 3.4-2 3.4s-2-2-2-3.4z" fill="#6b7075" opacity="0.85"/>
<path d="M369 423.8a2 2 0 1 1 4 0c0 1.4-2 3.4-2 3.4s-2-2-2-3.4z" fill="#f29a3b" opacity="0.85"/>
<path d="M335 442.8a2 2 0 1 1 4 0c0 1.4-2 3.4-2 3.4s-2-2-2-3.4z" fill="#34a853" opacity="0.85"/>
<path d="M338 448.8a2 2 0 1 1 4 0c0 1.4-2 3.4-2 3.4s-2-2-2-3.4z" fill="#6b7075" opacity="0.85"/>
<path d="M468 358.8a2 2 0 1 1 4 0c0 1.4-2 3.4-2 3.4s-2-2-2-3.4z" fill="#6b7075" opacity="0.85"/>
<path d="M478 350.8a2 2 0 1 1 4 0c0 1.4-2 3.4-2 3.4s-2-2-2-3.4z" fill="#6b7075" opacity="0.85"/>
<path d="M554 355.8a2 2 0 1 1 4 0c0 1.4-2 3.4-2 3.4s-2-2-2-3.4z" fill="#6b7075" opacity="0.85"/>
</g>
<circle cx="318.3" cy="216.9" r="17.3" fill="#fffdf6" opacity="0.3375"/>
<circle cx="318.3" cy="216.9" r="16.2" fill="#fffdf6" opacity="0.75"/>
<circle cx="318.3" cy="216.9" r="14.1" fill="#e05b5e"/>
<text x="318.3" y="220.6" text-anchor="middle" font-family="Liberation Sans" font-size="10.6" fill="#fde8e6" stroke="#fde8e6" stroke-width="0.35">20+</text>
<circle cx="370.7" cy="216.9" r="17.3" fill="#fffdf6" opacity="0.3375"/>
<circle cx="370.7" cy="216.9" r="16.2" fill="#fffdf6" opacity="0.75"/>
<circle cx="370.7" cy="216.9" r="14.1" fill="#e05b5e"/>
<text x="370.7" y="220.6" text-anchor="middle" font-family="Liberation Sans" font-size="10.6" fill="#fde8e6" stroke="#fde8e6" stroke-width="0.35">20+</text>
<circle cx="423.0" cy="216.9" r="17.3" fill="#f4fff4" opacity="0.3375"/>
<circle cx="423.0" cy="216.9" r="16.2" fill="#f4fff4" opacity="0.75"/>
<circle cx="423.0" cy="216.9" r="14.1" fill="#5aa464"/>
<text x="423.0" y="220.6" text-anchor="middle" font-family="Liberation Sans" font-size="10.4" fill="#d4f2d4" stroke="#d4f2d4" stroke-width="0.15">5</text>
<circle cx="475.4" cy="216.9" r="17.3" fill="#f4fff4" opacity="0.3375"/>
<circle cx="475.4" cy="216.9" r="16.2" fill="#f4fff4" opacity="0.75"/>
<circle cx="475.4" cy="216.9" r="14.1" fill="#5aa464"/>
<text x="475.4" y="220.6" text-anchor="middle" font-family="Liberation Sans" font-size="10.4" fill="#d4f2d4" stroke="#d4f2d4" stroke-width="0.15">4</text>
<circle cx="527.7" cy="216.9" r="17.3" fill="#f4fff4" opacity="0.3375"/>
<circle cx="527.7" cy="216.9" r="16.2" fill="#f4fff4" opacity="0.75"/>
<circle cx="527.7" cy="216.9" r="14.1" fill="#5aa464"/>
<text x="527.7" y="220.6" text-anchor="middle" font-family="Liberation Sans" font-size="10.4" fill="#d4f2d4" stroke="#d4f2d4" stroke-width="0.15">5</text>
<circle cx="318.3" cy="269.3" r="17.3" fill="#fffdf6" opacity="0.3375"/>
<circle cx="318.3" cy="269.3" r="16.2" fill="#fffdf6" opacity="0.75"/>
<circle cx="318.3" cy="269.3" r="14.1" fill="#e05b5e"/>
<text x="318.3" y="273.0" text-anchor="middle" font-family="Liberation Sans" font-size="10.6" fill="#fde8e6" stroke="#fde8e6" stroke-width="0.35">20+</text>
<circle cx="370.7" cy="269.3" r="17.3" fill="#fffdf6" opacity="0.3375"/>
<circle cx="370.7" cy="269.3" r="16.2" fill="#fffdf6" opacity="0.75"/>
<circle cx="370.7" cy="269.3" r="14.1" fill="#f5c943"/>
<text x="370.7" y="273.0" text-anchor="middle" font-family="Liberation Sans" font-size="10.4" fill="#fbe9b0" stroke="#fbe9b0" stroke-width="0.15">8</text>
<circle cx="423.0" cy="269.3" r="17.3" fill="#f4fff4" opacity="0.3375"/>
<circle cx="423.0" cy="269.3" r="16.2" fill="#f4fff4" opacity="0.75"/>
<circle cx="423.0" cy="269.3" r="14.1" fill="#5aa464"/>
<text x="423.0" y="273.0" text-anchor="middle" font-family="Liberation Sans" font-size="10.4" fill="#d4f2d4" stroke="#d4f2d4" stroke-width="0.15">2</text>
<circle cx="475.4" cy="269.3" r="17.3" fill="#f4fff4" opacity="0.4275"/>
<circle cx="475.4" cy="269.3" r="16.2" fill="#f4fff4" opacity="0.95"/>
<circle cx="475.4" cy="269.3" r="14.1" fill="#5aa464"/>
<text x="475.4" y="273.0" text-anchor="middle" font-family="Liberation Sans" font-size="10.4" fill="#d4f2d4" stroke="#d4f2d4" stroke-width="0.15">2</text>
<circle cx="527.7" cy="269.3" r="17.3" fill="#f4fff4" opacity="0.3375"/>
<circle cx="527.7" cy="269.3" r="16.2" fill="#f4fff4" opacity="0.75"/>
<circle cx="527.7" cy="269.3" r="14.1" fill="#5aa464"/>
<text x="527.7" y="273.0" text-anchor="middle" font-family="Liberation Sans" font-size="10.4" fill="#d4f2d4" stroke="#d4f2d4" stroke-width="0.15">5</text>
<circle cx="318.3" cy="321.7" r="17.3" fill="#fffdf6" opacity="0.3375"/>
<circle cx="318.3" cy="321.7" r="16.2" fill="#fffdf6" opacity="0.75"/>
<circle cx="318.3" cy="321.7" r="14.1" fill="#f5c943"/>
<text x="318.3" y="325.4" text-anchor="middle" font-family="Liberation Sans" font-size="10.4" fill="#fbe9b0" stroke="#fbe9b0" stroke-width="0.15">14</text>
<circle cx="370.7" cy="321.7" r="17.3" fill="#f4fff4" opacity="0.3375"/>
<circle cx="370.7" cy="321.7" r="16.2" fill="#f4fff4" opacity="0.75"/>
<circle cx="370.7" cy="321.7" r="14.1" fill="#5aa464"/>
<text x="370.7" y="325.4" text-anchor="middle" font-family="Liberation Sans" font-size="10.4" fill="#d4f2d4" stroke="#d4f2d4" stroke-width="0.15">4</text>
<circle cx="423.0" cy="321.7" r="17.3" fill="#f4fff4" opacity="0.4275"/>
<circle cx="423.0" cy="321.7" r="16.2" fill="#f4fff4" opacity="0.95"/>
<circle cx="423.0" cy="321.7" r="14.1" fill="#2f8d3b"/>
<text x="423.0" y="325.4" text-anchor="middle" font-family="Liberation Sans" font-size="10.4" fill="#d4f2d4" stroke="#d4f2d4" stroke-width="0.15">1</text>
<circle cx="475.4" cy="321.7" r="17.3" fill="#f4fff4" opacity="0.3375"/>
<circle cx="475.4" cy="321.7" r="16.2" fill="#f4fff4" opacity="0.75"/>
<circle cx="475.4" cy="321.7" r="14.1" fill="#5aa464"/>
<text x="475.4" y="325.4" text-anchor="middle" font-family="Liberation Sans" font-size="10.4" fill="#d4f2d4" stroke="#d4f2d4" stroke-width="0.15">3</text>
<circle cx="527.7" cy="321.7" r="17.3" fill="#fffdf6" opacity="0.3375"/>
<circle cx="527.7" cy="321.7" r="16.2" fill="#fffdf6" opacity="0.75"/>
<circle cx="527.7" cy="321.7" r="14.1" fill="#f5c943"/>
<text x="527.7" y="325.4" text-anchor="middle" font-family="Liberation Sans" font-size="10.4" fill="#fbe9b0" stroke="#fbe9b0" stroke-width="0.15">6</text>
<circle cx="318.3" cy="374.1" r="17.3" fill="#fffdf6" opacity="0.3375"/>
<circle cx="318.3" cy="374.1" r="16.2" fill="#fffdf6" opacity="0.75"/>
<circle cx="318.3" cy="374.1" r="14.1" fill="#f5c943"/>
<text x="318.3" y="377.8" text-anchor="middle" font-family="Liberation Sans" font-size="10.4" fill="#fbe9b0" stroke="#fbe9b0" stroke-width="0.15">7</text>
<circle cx="370.7" cy="374.1" r="17.3" fill="#f4fff4" opacity="0.4275"/>
<circle cx="370.7" cy="374.1" r="16.2" fill="#f4fff4" opacity="0.95"/>
<circle cx="370.7" cy="374.1" r="14.1" fill="#5aa464"/>
<text x="370.7" y="377.8" text-anchor="middle" font-family="Liberation Sans" font-size="10.4" fill="#d4f2d4" stroke="#d4f2d4" stroke-width="0.15">5</text>
<circle cx="423.0" cy="374.1" r="17.3" fill="#f4fff4" opacity="0.4275"/>
<circle cx="423.0" cy="374.1" r="16.2" fill="#f4fff4" opacity="0.95"/>
<circle cx="423.0" cy="374.1" r="14.1" fill="#5aa464"/>
<text x="423.0" y="377.8" text-anchor="middle" font-family="Liberation Sans" font-size="10.4" fill="#d4f2d4" stroke="#d4f2d4" stroke-width="0.15">3</text>
<circle cx="475.4" cy="374.1" r="17.3" fill="#f4fff4" opacity="0.3375"/>
<circle cx="475.4" cy="374.1" r="16.2" fill="#f4fff4" opacity="0.75"/>
<circle cx="475.4" cy="374.1" r="14.1" fill="#5aa464"/>
<text x="475.4" y="377.8" text-anchor="middle" font-family="Liberation Sans" font-size="10.4" fill="#d4f2d4" stroke="#d4f2d4" stroke-width="0.15">4</text>
<circle cx="527.7" cy="374.1" r="17.3" fill="#fffdf6" opacity="0.3375"/>
<circle cx="527.7" cy="374.1" r="16.2" fill="#fffdf6" opacity="0.75"/>
<circle cx="527.7" cy="374.1" r="14.1" fill="#f5c943"/>
<text x="527.7" y="377.8" text-anchor="middle" font-family="Liberation Sans" font-size="10.4" fill="#fbe9b0" stroke="#fbe9b0" stroke-width="0.15">12</text>
<circle cx="318.3" cy="426.5" r="17.3" fill="#f4fff4" opacity="0.3375"/>
<circle cx="318.3" cy="426.5" r="16.2" fill="#f4fff4" opacity="0.75"/>
<circle cx="318.3" cy="426.5" r="14.1" fill="#5aa464"/>
<text x="318.3" y="430.2" text-anchor="middle" font-family="Liberation Sans" font-size="10.4" fill="#d4f2d4" stroke="#d4f2d4" stroke-width="0.15">5</text>
<circle cx="370.7" cy="426.5" r="17.3" fill="#f4fff4" opacity="0.3375"/>
<circle cx="370.7" cy="426.5" r="16.2" fill="#f4fff4" opacity="0.75"/>
<circle cx="370.7" cy="426.5" r="14.1" fill="#5aa464"/>
<text x="370.7" y="430.2" text-anchor="middle" font-family="Liberation Sans" font-size="10.4" fill="#d4f2d4" stroke="#d4f2d4" stroke-width="0.15">4</text>
<circle cx="423.0" cy="426.5" r="17.3" fill="#f4fff4" opacity="0.3375"/>
<circle cx="423.0" cy="426.5" r="16.2" fill="#f4fff4" opacity="0.75"/>
<circle cx="423.0" cy="426.5" r="14.1" fill="#5aa464"/>
<text x="423.0" y="430.2" text-anchor="middle" font-family="Liberation Sans" font-size="10.4" fill="#d4f2d4" stroke="#d4f2d4" stroke-width="0.15">5</text>
<circle cx="475.4" cy="426.5" r="17.3" fill="#fffdf6" opacity="0.3375"/>
<circle cx="475.4" cy="426.5" r="16.2" fill="#fffdf6" opacity="0.75"/>
<circle cx="475.4" cy="426.5" r="14.1" fill="#e05b5e"/>
<text x="475.4" y="430.2" text-anchor="middle" font-family="Liberation Sans" font-size="10.6" fill="#fde8e6" stroke="#fde8e6" stroke-width="0.35">20+</text>
<circle cx="527.7" cy="426.5" r="17.3" fill="#fffdf6" opacity="0.3375"/>
<circle cx="527.7" cy="426.5" r="16.2" fill="#fffdf6" opacity="0.75"/>
<circle cx="527.7" cy="426.5" r="14.1" fill="#e05b5e"/>
<text x="527.7" y="430.2" text-anchor="middle" font-family="Liberation Sans" font-size="10.6" fill="#fde8e6" stroke="#fde8e6" stroke-width="0.35">20+</text>
<rect x="229" y="180.5" width="386" height="1" fill="#dcdcdc"/>
<rect x="229" y="180.5" width="1" height="281" fill="#dcdcdc"/>
</svg>
<!-- BANNER -->
<div class="a" style="left:229px;top:461px;width:386px;height:40px;background:#e4eef9"></div>
<svg class="a" style="left:240px;top:472px" width="20" height="20" viewBox="0 0 20 20"><path d="M17.3 10.4A7 7 0 1 0 10.3 17.4M14.3 10.4A4 4 0 1 0 10.3 14.4" fill="none" stroke="#4f5458" stroke-width="1.4"/><path d="M11.2 10.8L17.8 13.2 15.4 14.3 18.2 17.1 17 18.3 14.2 15.5 13 17.6z" fill="#4f5458"/></svg>
<div class="a t" style="left:270px;top:476.5px;font-size:10.7px;line-height:12px;color:#5f6368">Click hotspots to see results change based on location</div>
<!-- TABLE -->
<div class="a" style="left:217px;top:528px;width:739px;height:35px;background:#f3f3f3;border-bottom:1px solid #e2e2e2"></div>
<div class="a t m" style="left:236px;top:540px;font-size:8.9px;line-height:12px;color:#202124">Keyword</div>
<svg class="a sort" style="left:273.5px;top:541px" width="6" height="9" viewBox="0 0 6 9"><path d="M0.8 3.2L3 1 5.2 3.2M0.8 5.8L3 8 5.2 5.8" fill="none" stroke="#9a9a9a" stroke-width="0.9"/></svg>
<svg class="a" style="left:445px;top:538px" width="12" height="16" viewBox="0 0 12 16"><path d="M6 0.5C2.9 0.5 0.5 2.9 0.5 5.9c0 1.4.5 2.6 1.3 3.6L6 15.5 10.2 9.5c.8-1 1.3-2.2 1.3-3.6C11.5 2.9 9.1.5 6 .5z" fill="#34a853"/><path d="M1.8 9.5C1 8.5.5 7.3.5 5.9c0-1.6.7-3 1.8-4L6 5.6z" fill="#fbbc04"/><path d="M2.3 1.9C3.3 1 4.6.5 6 .5l-1.6 3.5z" fill="#ea4335"/><path d="M6 .5c1.6 0 3 .6 4 1.6L6 5.9 4.4 4z" fill="#4285f4"/><path d="M10 2.1c1 1 1.5 2.3 1.5 3.8L6 5.9z" fill="#4285f4"/><circle cx="6" cy="5.6" r="1.9" fill="#fff"/></svg>
<div class="a t m" style="left:460.5px;top:539.5px;font-size:8.8px;line-height:12px;color:#202124">Maps</div>
<svg class="a sort" style="left:485.5px;top:541px" width="6" height="9" viewBox="0 0 6 9"><path d="M0.8 3.2L3 1 5.2 3.2M0.8 5.8L3 8 5.2 5.8" fill="none" stroke="#9a9a9a" stroke-width="0.9"/></svg>
<svg class="a" style="left:595px;top:539px" width="14" height="14" viewBox="0 0 24 24"><path d="M22.56 12.25c0-.78-.07-1.53-.2-2.25H12v4.26h5.92c-.26 1.37-1.04 2.53-2.21 3.31v2.77h3.57c2.08-1.92 3.28-4.74 3.28-8.09z" fill="#4285F4"/><path d="M12 23c2.97 0 5.46-.98 7.28-2.66l-3.57-2.77c-.98.66-2.23 1.06-3.71 1.06-2.86 0-5.29-1.93-6.16-4.53H2.18v2.84C3.99 20.53 7.7 23 12 23z" fill="#34A853"/><path d="M5.84 14.09c-.22-.66-.35-1.36-.35-2.09s.13-1.43.35-2.09V7.07H2.18C1.43 8.55 1 10.22 1 12s.43 3.45 1.18 4.93l2.85-2.22.81-.62z" fill="#FBBC05"/><path d="M12 5.38c1.62 0 3.06.56 4.21 1.64l3.15-3.15C17.45 2.09 14.97 1 12 1 7.7 1 3.99 3.47 2.18 7.07l3.66 2.84c.87-2.6 3.3-4.53 6.16-4.53z" fill="#EA4335"/></svg>
<div class="a t m" style="left:611.5px;top:540px;font-size:8.95px;line-height:12px;color:#202124">Organic</div>
<svg class="a sort" style="left:646px;top:541px" width="6" height="9" viewBox="0 0 6 9"><path d="M0.8 3.2L3 1 5.2 3.2M0.8 5.8L3 8 5.2 5.8" fill="none" stroke="#9a9a9a" stroke-width="0.9"/></svg>
<div class="a t m" style="left:687px;top:540px;font-size:9.4px;line-height:12px;color:#202124">Rank difficulty</div>
<svg class="a sort" style="left:749px;top:541px" width="6" height="9" viewBox="0 0 6 9"><path d="M0.8 3.2L3 1 5.2 3.2M0.8 5.8L3 8 5.2 5.8" fill="none" stroke="#9a9a9a" stroke-width="0.9"/></svg>
<div class="a t m" style="left:777px;top:540px;font-size:9.15px;line-height:12px;color:#202124">Search volume (last 30 days)</div>
<svg class="a sort" style="left:898px;top:541px" width="6" height="9" viewBox="0 0 6 9"><path d="M0.8 3.2L3 1 5.2 3.2M0.8 5.8L3 8 5.2 5.8" fill="none" stroke="#9a9a9a" stroke-width="0.9"/></svg>
<div class="a" style="left:217px;top:597px;width:739px;height:1px;background:#e0e0e0"></div>
<div class="a" style="left:217px;top:631px;width:739px;height:1px;background:#e0e0e0"></div>
<div class="a" style="left:217px;top:666px;width:739px;height:1px;background:#e0e0e0"></div>
<div class="a t" style="left:236px;top:574.4px;font-size:10.75px;line-height:12px;color:#202124">Saskatoon kitten adoptions</div>
<div class="a t" style="left:483px;top:574.4px;font-size:10.5px;line-height:12px;color:#202124">1 -</div>
<div class="a t" style="left:635.5px;top:574.4px;font-size:10.5px;line-height:12px;color:#202124">1</div>
<svg class="a" style="left:643.5px;top:577.4px" width="5" height="3" viewBox="0 0 5 3"><path d="M0 2.5L2.5 0 5 2.5z" fill="#8a8a8a"/></svg>
<div class="a t" style="left:650px;top:574.4px;font-size:10.5px;line-height:12px;color:#2e8b57">2</div>
<div class="a t" style="left:691px;top:574.4px;font-size:10.6px;line-height:12px;color:#202124">Low</div>
<div class="a t" style="left:800px;top:575.4px;width:102.5px;text-align:right;font-size:10.3px;line-height:12px;color:#202124">259</div>
<svg class="a" style="left:932px;top:576.9px" width="11" height="7" viewBox="0 0 11 7"><path d="M1 1L5.5 5.5 10 1" fill="none" stroke="#202124" stroke-width="1.6"/></svg>
<div class="a t" style="left:236px;top:608.6px;font-size:10.5px;line-height:12px;color:#202124">Where to adopt a cat Saskat..</div>
<div class="a t" style="left:475.5px;top:608.6px;font-size:10.5px;line-height:12px;color:#202124">1</div>
<svg class="a" style="left:483.5px;top:611.6px" width="5" height="3" viewBox="0 0 5 3"><path d="M0 2.5L2.5 0 5 2.5z" fill="#8a8a8a"/></svg>
<div class="a t" style="left:490px;top:608.6px;font-size:10.5px;line-height:12px;color:#6b8e7a">1</div>
<div class="a t" style="left:635.5px;top:608.6px;font-size:10.5px;line-height:12px;color:#202124">2</div>
<svg class="a" style="left:643.5px;top:611.6px" width="5" height="3" viewBox="0 0 5 3"><path d="M0 2.5L2.5 0 5 2.5z" fill="#8a8a8a"/></svg>
<div class="a t" style="left:650px;top:608.6px;font-size:10.5px;line-height:12px;color:#6b9b7b">2</div>
<div class="a t" style="left:691px;top:608.6px;font-size:10.6px;line-height:12px;color:#202124">Low</div>
<div class="a t" style="left:800px;top:609.6px;width:102.5px;text-align:right;font-size:10.3px;line-height:12px;color:#202124">389</div>
<svg class="a" style="left:932px;top:611.1px" width="11" height="7" viewBox="0 0 11 7"><path d="M1 1L5.5 5.5 10 1" fill="none" stroke="#202124" stroke-width="1.6"/></svg>
<div class="a t" style="left:236px;top:642.7px;font-size:10.65px;line-height:12px;color:#202124">Cat adoption Saskatoon</div>
<div class="a t" style="left:475.5px;top:642.7px;font-size:10.5px;line-height:12px;color:#202124">2</div>
<svg class="a" style="left:483.5px;top:645.7px" width="5" height="3" viewBox="0 0 5 3"><path d="M0 0.5L5 0.5 2.5 3z" fill="#8a8a8a"/></svg>
<div class="a t" style="left:490px;top:642.7px;font-size:10.5px;line-height:12px;color:#aaa">1</div>
<div class="a t" style="left:635.5px;top:642.7px;font-size:10.5px;line-height:12px;color:#202124">4</div>
<svg class="a" style="left:643.5px;top:645.7px" width="5" height="3" viewBox="0 0 5 3"><path d="M0 2.5L2.5 0 5 2.5z" fill="#8a8a8a"/></svg>
<div class="a t" style="left:650px;top:642.7px;font-size:10.5px;line-height:12px;color:#4a9a6a">2</div>
<div class="a t" style="left:691px;top:642.7px;font-size:10.6px;line-height:12px;color:#202124">Medium</div>
<div class="a t" style="left:800px;top:643.7px;width:102.5px;text-align:right;font-size:10.3px;line-height:12px;color:#202124">1,583</div>
<svg class="a" style="left:932px;top:645.2px" width="11" height="7" viewBox="0 0 11 7"><path d="M1 1L5.5 5.5 10 1" fill="none" stroke="#202124" stroke-width="1.6"/></svg>
<div class="a t" style="left:236px;top:678px;font-size:10.45px;line-height:12px;color:#202124">Cat Cafe Saskatoon</div>
<div class="a t" style="left:475.5px;top:678px;font-size:10.5px;line-height:12px;color:#202124">2</div>
<svg class="a" style="left:483.5px;top:681px" width="5" height="3" viewBox="0 0 5 3"><path d="M0 2.5L2.5 0 5 2.5z" fill="#8a8a8a"/></svg>
<div class="a t" style="left:490px;top:678px;font-size:10.5px;line-height:12px;color:#1e8e5e">1</div>
<div class="a t" style="left:635.5px;top:678px;font-size:10.5px;line-height:12px;color:#202124">6</div>
<svg class="a" style="left:643.5px;top:681px" width="5" height="3" viewBox="0 0 5 3"><path d="M0 2.5L2.5 0 5 2.5z" fill="#8a8a8a"/></svg>
<div class="a t" style="left:650px;top:678px;font-size:10.5px;line-height:12px;color:#4a9a6a">2</div>
<div class="a t" style="left:691px;top:678px;font-size:10.6px;line-height:12px;color:#202124">Low</div>
<div class="a t" style="left:800px;top:678.3px;width:102.5px;text-align:right;font-size:10.3px;line-height:12px;color:#202124">501</div>
<svg class="a" style="left:932px;top:679.7px" width="11" height="7" viewBox="0 0 11 7"><path d="M1 1L5.5 5.5 10 1" fill="none" stroke="#202124" stroke-width="1.6"/></svg>
</body></html>
